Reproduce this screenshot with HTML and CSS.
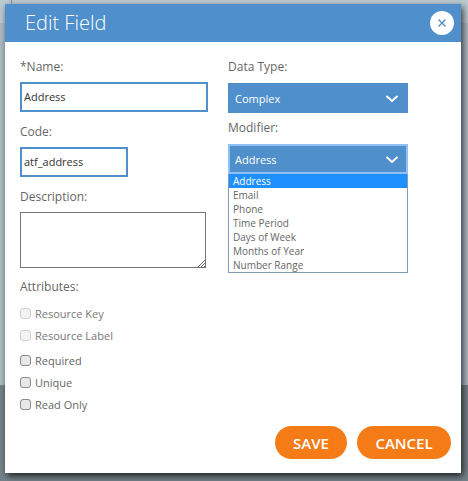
FILE: index.html
```html
<!DOCTYPE html>
<html lang="en">
<head>
    <meta charset="UTF-8">
    <title>Edit Field</title>
    <link rel="stylesheet" href="styles.css">
</head>
<body>
    <div class="backdrop-line"></div>
    <div class="modal">
        <div class="modal-header">
            <h1>Edit Field</h1>
            <button class="close-btn" type="button">
                <svg width="10" height="10" viewBox="0 0 10 10"><path d="M1.500 1.500l7 7M8.500 1.500l-7 7" fill="none" stroke="#4f8fcb" stroke-width="1.400"/></svg>
            </button>
        </div>
        <div class="modal-body">
            <div class="col col-left">
                <label class="field-label">*Name:</label>
                <div class="text-input name-input">Address</div>
                <label class="field-label code-label">Code:</label>
                <div class="text-input code-input">atf_address</div>
                <label class="field-label desc-label">Description:</label>
                <div class="desc-input">
                    <svg class="grip" width="8" height="8" viewBox="0 0 8 8"><path d="M1 8l7-7M4 8l4-4M7 8l1-1" fill="none" stroke="#666" stroke-width="1"/></svg>
                </div>
                <label class="field-label attr-label">Attributes:</label>
                <div class="check-row disabled first"><span class="box"></span>Resource Key</div>
                <div class="check-row disabled"><span class="box"></span>Resource Label</div>
                <div class="check-row gap"><span class="box"></span>Required</div>
                <div class="check-row"><span class="box"></span>Unique</div>
                <div class="check-row"><span class="box"></span>Read Only</div>
            </div>
            <div class="col col-right">
                <label class="field-label">Data Type:</label>
                <div class="select type-select">
                    <span>Complex</span>
                    <svg width="14" height="8" viewBox="0 0 14 8"><path d="M1.500 1l5.500 5 5.500-5" fill="none" stroke="#fff" stroke-width="2"/></svg>
                </div>
                <label class="field-label mod-label">Modifier:</label>
                <div class="select mod-select">
                    <span>Address</span>
                    <svg width="14" height="8" viewBox="0 0 14 8"><path d="M1.500 1l5.500 5 5.500-5" fill="none" stroke="#fff" stroke-width="2"/></svg>
                </div>
                <ul class="options">
                    <li class="active">Address</li>
                    <li>Email</li>
                    <li>Phone</li>
                    <li>Time Period</li>
                    <li>Days of Week</li>
                    <li>Months of Year</li>
                    <li>Number Range</li>
                </ul>
            </div>
        </div>
        <div class="modal-footer">
            <button class="btn save" type="button">SAVE</button>
            <button class="btn cancel" type="button">CANCEL</button>
        </div>
    </div>
</body>
</html>
```

FILE: styles.css
```css
body {
    margin: 0;
    padding: 4px 7px 8px 5px;
    box-sizing: border-box;
    height: 481px;
    overflow: hidden;
    background: linear-gradient(#bccad1 0, #bccad1 23px, #aebcc3 23px, #aebcc3 385px, #76838a 385px);
    font-family: "Open Sans", sans-serif;
    color: #666;
    font-size: 12px;
    position: relative;
}

.backdrop-line {
    position: absolute;
    left: 11px;
    top: 0;
    width: 1px;
    height: 4px;
    background-color: #7d8a91;
}

.modal {
    width: 456px;
    height: 469px;
    background-color: #fff;
    box-shadow: 2px 3px 7px rgba(0, 0, 0, 0.75);
    display: flex;
    flex-direction: column;
}

.modal-header {
    height: 38px;
    flex-shrink: 0;
    background-color: #4f8fcb;
    display: flex;
    align-items: center;
    justify-content: space-between;
    padding: 0 7px 0 20px;
}

.modal-header h1 {
    margin: 0 0 2px;
    font-size: 20px;
    font-weight: 300;
    color: #fff;
}

.close-btn {
    width: 24px;
    height: 24px;
    border: none;
    border-radius: 50%;
    background-color: #fff;
    padding: 0;
    display: flex;
    align-items: center;
    justify-content: center;
}

.modal-body {
    flex: 1;
    display: flex;
    padding: 16px 15px 0 15px;
}

.col-left {
    width: 208px;
}

.col-right {
    width: 180px;
}

.field-label {
    display: block;
    line-height: 18px;
    font-size: 12px;
    color: #666;
}

.text-input {
    box-sizing: border-box;
    border: 2px solid #4f8fcb;
    height: 30px;
    margin-top: 6px;
    padding-left: 2px;
    line-height: 26px;
    font-size: 11px;
    color: #333;
    background-color: #fff;
}

.name-input {
    width: 188px;
}

.code-input {
    width: 108px;
}

.code-label,
.desc-label {
    margin-top: 11px;
}

.desc-input {
    box-sizing: border-box;
    width: 186px;
    height: 56px;
    margin-top: 6px;
    border: 1px solid #767676;
    position: relative;
}

.grip {
    position: absolute;
    right: 0;
    bottom: 0;
}

.attr-label {
    margin-top: 10px;
}

.check-row {
    display: flex;
    align-items: center;
    height: 22px;
    font-size: 11px;
    color: #666;
}

.check-row.first {
    margin-top: 6px;
}

.check-row.gap {
    margin-top: 3px;
}

.check-row.disabled {
    color: #777;
}

.box {
    box-sizing: border-box;
    width: 11px;
    height: 11px;
    margin-right: 4px;
    border: 1px solid #8a8a8a;
    border-radius: 3px;
    background-color: #e8e8e8;
}

.check-row.disabled .box {
    border-color: #cfcfcf;
    background-color: #f3f3f3;
}

.select {
    box-sizing: border-box;
    width: 180px;
    height: 30px;
    background-color: #4f8fcb;
    color: #fff;
    display: flex;
    align-items: center;
    justify-content: space-between;
    padding: 1px 9px 0 7px;
    font-size: 11px;
}

.type-select {
    margin-top: 7px;
}

.mod-label {
    margin-top: 6px;
}

.mod-select {
    margin-top: 7px;
    border: 2px solid #8fc1f5;
    padding-left: 5px;
    padding-right: 7px;
}

.options {
    list-style: none;
    margin: 0;
    padding: 0;
    box-sizing: border-box;
    width: 180px;
    border: 1px solid #7f9db9;
    border-top: none;
    font-size: 10px;
    color: #666;
}

.options li {
    height: 14px;
    line-height: 14px;
    padding-left: 4px;
}

.options li.active {
    background-color: #1e90ff;
    color: #fff;
}

.modal-footer {
    display: flex;
    justify-content: flex-end;
    gap: 10px;
    padding: 0 10px 14px 0;
}

.btn {
    height: 33px;
    padding: 0;
    border: none;
    border-radius: 17px;
    background-color: #f47b16;
    color: #fff;
    font-family: "Open Sans", sans-serif;
    font-size: 15px;
    font-weight: 600;
}

.save {
    width: 72px;
}

.cancel {
    width: 94px;
}
```
